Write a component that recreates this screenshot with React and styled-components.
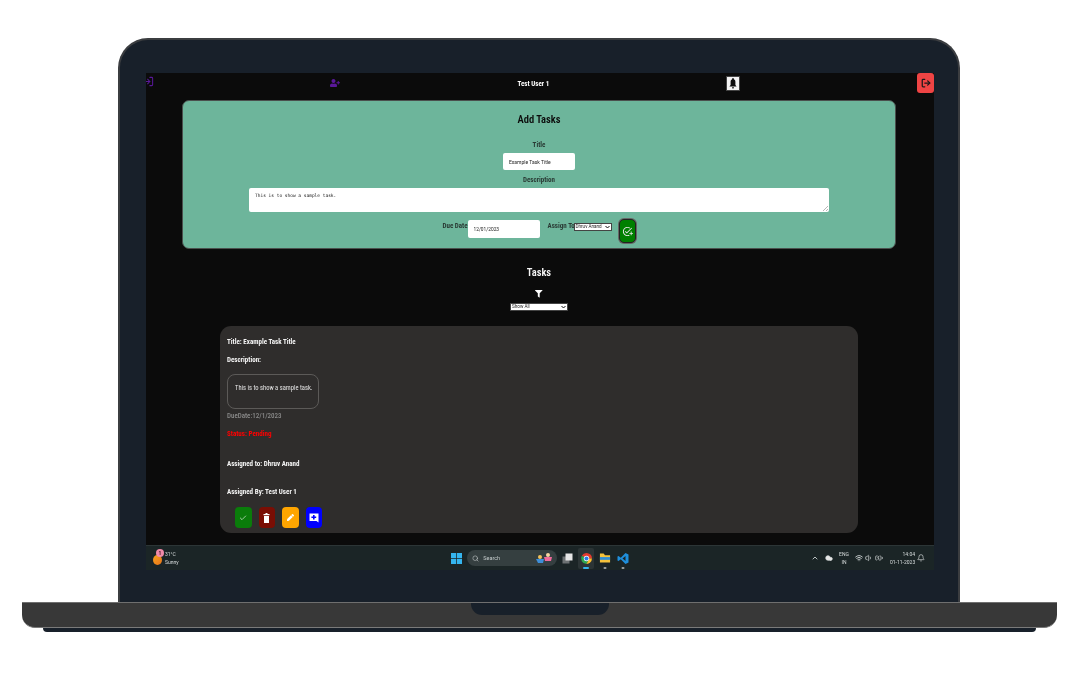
import React from "react";
import styled, { createGlobalStyle } from "styled-components";
import { FaUserPlus, FaFilter, FaPen } from "react-icons/fa";
import { MdOutlineAddTask } from "react-icons/md";
import { LogIn, LogOut, Search, ChevronUp, Wifi, Volume1, BatteryCharging, Bell, Cloud, Check } from "lucide-react";

const Global = createGlobalStyle`
  html, body { margin: 0; padding: 0; background: #fff; }
  body { font-family: "Roboto", "Liberation Sans", sans-serif; }
  * { box-sizing: border-box; }
`;

const Page = styled.div`
  width: 1080px; height: 686px; overflow: hidden; background: #fff;
  display: flex; flex-direction: column; align-items: center; padding: 38px 2px 0 0;
`;
const Lid = styled.div`
  width: 842px; height: 564px; flex: none; background: #18202a;
  border: 2px solid #3b3d40; border-bottom: 0; border-radius: 30px 30px 0 0;
  padding: 33px 26px 0;
`;
const Screen = styled.div`
  width: 788px; height: 497px; background: #0b0b0b; display: flex; flex-direction: column;
  filter: blur(0.35px);
`;
const Content = styled.div`
  flex: 1; min-height: 0; display: flex; flex-direction: column;
`;
const Main = styled.main`
  display: flex; flex-direction: column; align-items: center; padding-right: 2px;
`;
const Nav = styled.nav`
  width: 100%; height: 27px; flex: none; display: flex; justify-content: space-between; align-items: flex-start;
  color: #5a189a; overflow: hidden;
`;
const NavIcon = styled.span`
  display: flex; width: ${p => p.$w}px; padding-top: ${p => p.$top}px; justify-content: flex-end;
`;
const UserName = styled.span`
  font-size: 7px; font-stretch: 85%; font-weight: 700; color: #fff; padding-top: 7px; width: 31px; white-space: nowrap;
`;
const BellBox = styled.span`
  width: 14px; height: 15px; margin-top: 3px; background: #f3f3f3; color: #0b0b0b; border: 1px solid #444;
  display: flex; align-items: center; justify-content: center;
`;
const LogoutBox = styled.span`
  width: 17px; height: 20px; background: #ef4444; border-radius: 3px; color: #1a1a1a;
  display: flex; align-items: center; justify-content: center;
`;

const AddCard = styled.section`
  width: 714px; height: 149px; flex: none; background: #6db59b; border: 1px solid #4a4f4d; border-radius: 7px;
  display: flex; flex-direction: column; align-items: center; padding-top: 12px;
`;
const Heading = styled.h2`
  font-size: 10.5px; font-stretch: 75%; line-height: 14px; font-weight: 600; color: ${p => p.$color};
  margin: ${p => p.$top}px 0 0;
`;
const Label = styled.label`
  font-size: 7px; font-stretch: 85%; font-weight: 700; color: #2a3b35; line-height: 8px; white-space: nowrap;
`;
const TitleLabel = styled(Label)` margin-top: 14px; `;
const DescLabel = styled(Label)` margin-top: 6px; `;
const TextBox = styled.input`
  width: 72px; height: 17px; border: 0; border-radius: 2px; background: #fff; margin-top: 4px; padding: 0 6px;
  font: 5px "Roboto", sans-serif; color: #222; outline: 0;
`;
const Area = styled.div`
  width: 580px; height: 24px; margin-top: 4px; background: #fff; border-radius: 2px; padding: 5px 6px; position: relative;
  font: 4.5px "DejaVu Sans Mono", "Liberation Mono", monospace; color: #222;
`;
const Grip = styled.svg`
  position: absolute; right: 1px; bottom: 1px;
`;
const DueRow = styled.div`
  display: flex; align-items: flex-start; margin-top: 8px;
`;
const RowLabel = styled(Label)` padding-top: 2px; width: ${p => p.$w}px; `;
const DateBox = styled(TextBox)` margin: 0 8px 0 0; height: 18px; font-size: 4.8px; `;
const FakeSelect = styled.div`
  height: 8px; width: ${p => p.$w}px; background: #fff; border: 1px solid #444; margin-top: ${p => p.$top || 0}px;
  font-size: 4.6px; line-height: 6px; padding: 0 1px; color: #222; display: flex; justify-content: space-between; align-items: center; white-space: nowrap; overflow: hidden;
`;
const Caret = styled.svg` flex: none; `;
const GoBtn = styled.span`
  width: 17px; height: 24px; margin: -1px 0 0 7px; background: #008000; border: 1px solid #222; box-shadow: 0 0 0 1px #666; border-radius: 5px;
  color: #e6e6e6; display: flex; align-items: center; justify-content: center;
`;

const FilterIcon = styled.span`
  display: flex; color: #fff; margin: 10px 0 5.5px 0;
`;
const TaskCard = styled.article`
  width: 638px; height: 207px; flex: none; margin-top: 15px; background: #2f2d2c; border-radius: 11px; padding: 12px 7px 0;
  display: flex; flex-direction: column; align-items: flex-start;
`;
const TaskLine = styled.p`
  margin: ${p => p.$top || 0}px 0 0; font-size: 7px; font-stretch: 84%; line-height: 8px; font-weight: ${p => p.$light ? 500 : 700};
  color: ${p => p.$color || "#f4f4f4"}; white-space: nowrap;
`;
const DescBox = styled.div`
  width: 92px; height: 35px; margin-top: 10px; border: 1px solid #5c5a58; border-radius: 8px; padding: 9px 7px;
  font-size: 6.5px; font-stretch: 85%; line-height: 8px; color: #e6e6e6; white-space: nowrap;
`;
const Actions = styled.div`
  display: flex; gap: 7px; margin: 11px 0 0 8px;
`;
const ActionBtn = styled.span`
  width: 16.5px; height: 21px; border-radius: 4px; background: ${p => p.$bg}; color: #fff;
  display: flex; align-items: center; justify-content: center;
`;

const Taskbar = styled.footer`
  height: 25px; flex: none; background: #1b2526; border-top: 1px solid #2c3536; display: grid; grid-template-columns: 1fr auto 1fr; align-items: center; color: #d9dede;
`;
const Weather = styled.div`
  display: flex; align-items: center; gap: 3px; padding-left: 7px;
`;
const WeatherIcon = styled.span`
  width: 9px; height: 10px; border-radius: 50%; background: linear-gradient(135deg,#f7a21c,#e8741a); position: relative; margin-top: 4px;
`;
const WeatherBadge = styled.span`
  position: absolute; top: -6px; right: -2px; width: 8px; height: 8px; border-radius: 50%; background: #f08aa8; color: #3a1020; font-size: 5px; line-height: 8px; text-align: center; font-weight: 700;
`;
const Stack = styled.span`
  display: flex; flex-direction: column; font-size: 5px; line-height: 8px; width: ${p => p.$w ? p.$w + "px" : "auto"}; text-align: ${p => p.$align || "left"}; color: #d7dcdc; white-space: nowrap;
`;
const Center = styled.div`
  display: flex; align-items: center; gap: 2.5px;
`;
const TaskIcon = styled.span`
  width: 16px; height: 21px; position: relative; display: flex; align-items: center; justify-content: center; border-radius: 2px;
  background: ${p => p.$active ? "rgba(255,255,255,.07)" : "transparent"};
  ${p => p.$mark ? `&::after { content: ""; position: absolute; bottom: 0; left: 50%; transform: translateX(-50%); height: 2px; border-radius: 1px; width: ${p.$active ? 6 : 3}px; background: ${p.$active ? "#35b5ee" : "#9aa0a0"}; }` : ""}
`;
const SearchBox = styled.div`
  width: 90px; height: 16px; border-radius: 8px; background: #353f40; display: flex; align-items: center; padding: 0 5px; gap: 4px; font-size: 5.5px; color: #c4caca; position: relative;
`;
const SearchArt = styled.svg` position: absolute; right: 2px; top: 1px; `;
const Tray = styled.div`
  display: flex; align-items: center; justify-content: flex-end; gap: 6px; padding-right: 9px;
`;
const TrayGroup = styled.span` display: flex; align-items: center; gap: 2px; margin-right: 1px; `;
const ClockBell = styled.span` display: flex; align-items: center; gap: 2px; `;

const Base = styled.div`
  width: 1035px; height: 26px; flex: none; margin-left: 1px; background: #383838; border-top: 1px solid #6f6f6f; border-bottom: 1px solid #7a7a7a; border-radius: 0 0 13px 13px;
  display: flex; justify-content: center;
`;
const Notch = styled.div`
  width: 138px; height: 12px; background: #18202a; border-radius: 0 0 11px 11px;
`;
const Foot = styled.div`
  width: 993px; height: 4px; flex: none; margin-left: 1px; background: #18202a; border-radius: 0 0 6px 6px;
`;

const WinLogo = () => (
  <svg width="11" height="11" viewBox="0 0 12 12"><g fill="#35b5ee"><rect width="5.6" height="5.6"/><rect x="6.4" width="5.6" height="5.6"/><rect y="6.4" width="5.6" height="5.6"/><rect x="6.4" y="6.4" width="5.6" height="5.6"/></g></svg>
);
const Chrome = () => (
  <svg width="13" height="13" viewBox="0 0 24 24"><path d="M12 12 3.3 7A10 10 0 0 1 22 12H12z" fill="#e33b2e"/><path d="M3.3 7A10 10 0 0 0 12 22l5-10H12z" fill="#2fa84f"/><path d="M22 12A10 10 0 0 1 12 22l5-10z" fill="#fbc02d"/><circle cx="12" cy="12" r="5" fill="#fff"/><circle cx="12" cy="12" r="3.8" fill="#2c7be5"/></svg>
);
const Folder = () => (
  <svg width="12" height="12" viewBox="0 0 13 12"><path d="M1 1h4l1.5 2H12v8H1z" fill="#f5c33b"/><rect x="1" y="5" width="11" height="3" fill="#2f8fd8"/></svg>
);
const VSCode = () => (
  <svg width="12" height="13" viewBox="0 0 24 24"><path d="M17 1 7.5 10.5 3 7 1 8v8l2 1 4.5-3.5L17 23l6-3V4z" fill="#1f8fdc"/><path d="M17 7v10l-6-5z" fill="#1b2526"/></svg>
);
const Copilot = () => (
  <svg width="11" height="11" viewBox="0 0 11 11"><rect x="0.5" y="3.5" width="7" height="7" fill="#6c7172"/><rect x="3.5" y="0.5" width="7" height="7" fill="#e6e6e6"/></svg>
);
const SlimBell = () => (
  <svg width="8" height="11" viewBox="0 0 8 11"><path d="M4 0c.5 0 .8.3.8.8v.5C6 1.7 6.4 2.9 6.4 4v3L7.6 8.6H.4L1.6 7V4c0-1.1.4-2.3 1.6-2.7V.8C3.2.3 3.5 0 4 0zM3 9.2h2C5 10 4.6 10.6 4 10.6S3 10 3 9.2z" fill="currentColor"/></svg>
);
const SlimTrash = () => (
  <svg width="7" height="10" viewBox="0 0 7 10"><path d="M.5 1h6v1.2h-6zM2.5 0h2v1h-2zM1 3h5v7H1z" fill="currentColor"/></svg>
);
const NotePlus = () => (
  <svg width="10" height="10" viewBox="0 0 10 10"><path d="M.5.5h9v9L7.500 8H.5z" fill="#fff"/><path d="M4 2h1.600v1.600h1.600v1.400H5.600v1.600H4V5H2.400V3.600H4z" fill="#0000ff"/></svg>
);
const ChevronMark = () => (
  <Caret width="5" height="4" viewBox="0 0 5 4"><path d="M.5 1 2.500 3 4.500 1" fill="none" stroke="#111" strokeWidth="1" /></Caret>
);

export default function App() {
  return (
    <Page>
      <Global />
      <Lid>
        <Screen>
          <Content>
            <Nav>
              <NavIcon $w={8} $top={3}><LogIn size={11} strokeWidth={2.2} style={{ flex: "none" }} /></NavIcon>
              <NavIcon $w={9} $top={5}><FaUserPlus size={10} style={{ flex: "none" }} /></NavIcon>
              <UserName>Test User 1</UserName>
              <BellBox><SlimBell /></BellBox>
              <LogoutBox><LogOut size={10} strokeWidth={3} /></LogoutBox>
            </Nav>
            <Main>
              <AddCard>
                <Heading $top={0} $color="#0b0b0b">Add Tasks</Heading>
                <TitleLabel>Title</TitleLabel>
                <TextBox defaultValue="Example Task Title" />
                <DescLabel>Description</DescLabel>
                <Area>
                  This is to show a sample task.
                  <Grip width="5" height="5" viewBox="0 0 5 5"><path d="M0 5 5 0M3 5 5 3" stroke="#888" strokeWidth=".6" /></Grip>
                </Area>
                <DueRow>
                  <RowLabel $w={25}>Due Date</RowLabel>
                  <DateBox defaultValue="12/01/2023" />
                  <RowLabel $w={26}>Assign To</RowLabel>
                  <FakeSelect $w={38} $top={3}>
                    Dhruv Anand
                    <ChevronMark />
                  </FakeSelect>
                  <GoBtn><MdOutlineAddTask size={11} /></GoBtn>
                </DueRow>
              </AddCard>
              <Heading $top={17} $color="#f5f5f5">Tasks</Heading>
              <FilterIcon><FaFilter size={7.5} /></FilterIcon>
              <FakeSelect $w={58}>
                Show All
                <ChevronMark />
              </FakeSelect>
              <TaskCard>
                <TaskLine>Title: Example Task Title</TaskLine>
                <TaskLine $top={10}>Description:</TaskLine>
                <DescBox>This is to show a sample task.</DescBox>
                <TaskLine $top={3} $light $color="#8b8b8b">DueDate:12/1/2023</TaskLine>
                <TaskLine $top={10} $color="#ff0000">Status: Pending</TaskLine>
                <TaskLine $top={22}>Assigned to: Dhruv Anand</TaskLine>
                <TaskLine $top={20}>Assigned By: Test User 1</TaskLine>
                <Actions>
                  <ActionBtn $bg="#0a7c0a"><Check size={8} strokeWidth={1.8} /></ActionBtn>
                  <ActionBtn $bg="#7a0e04"><SlimTrash /></ActionBtn>
                  <ActionBtn $bg="#ffa500"><FaPen size={7} /></ActionBtn>
                  <ActionBtn $bg="#0000ff"><NotePlus /></ActionBtn>
                </Actions>
              </TaskCard>
            </Main>
          </Content>
          <Taskbar>
            <Weather>
              <WeatherIcon><WeatherBadge>1</WeatherBadge></WeatherIcon>
              <Stack><span>31°C</span><span>Sunny</span></Stack>
            </Weather>
            <Center>
              <TaskIcon><WinLogo /></TaskIcon>
              <SearchBox>
                <Search size={7} />Search
                <SearchArt width="20" height="14" viewBox="0 0 20 14"><path d="M1 8h8l-1 4H3z" fill="#3e8ed8"/><circle cx="5" cy="6" r="2" fill="#f3c35b"/><path d="M9 6h8l-1 4h-6z" fill="#f06a9b"/><circle cx="13" cy="4" r="2" fill="#f8d4a0"/></SearchArt>
              </SearchBox>
              <TaskIcon><Copilot /></TaskIcon>
              <TaskIcon $active $mark><Chrome /></TaskIcon>
              <TaskIcon $mark><Folder /></TaskIcon>
              <TaskIcon $mark><VSCode /></TaskIcon>
            </Center>
            <Tray>
              <ChevronUp size={8} strokeWidth={2.5} />
              <Cloud size={8} fill="#e6e6e6" />
              <Stack $align="center" $w={10}><span>ENG</span><span>IN</span></Stack>
              <TrayGroup><Wifi size={8} strokeWidth={2.5} /><Volume1 size={8} /><BatteryCharging size={8} /></TrayGroup>
              <ClockBell>
                <Stack $align="right" $w={25}><span>14:04</span><span>01-11-2023</span></Stack>
                <Bell size={8} />
              </ClockBell>
            </Tray>
          </Taskbar>
        </Screen>
      </Lid>
      <Base><Notch /></Base>
      <Foot />
    </Page>
  );
}
